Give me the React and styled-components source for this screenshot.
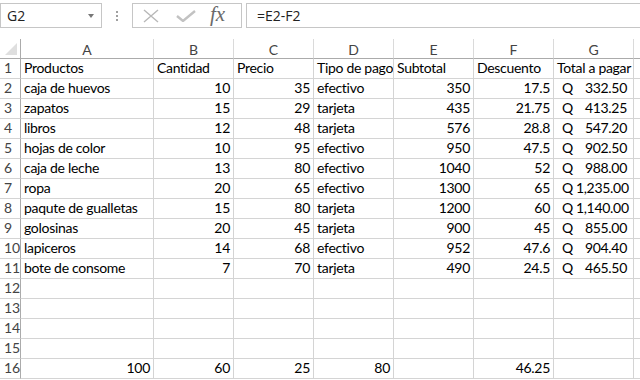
import React from "react";
import styled, { createGlobalStyle } from "styled-components";

const GlobalStyle = createGlobalStyle`
  html, body {
    margin: 0;
    padding: 0;
    background: #ffffff;
    overflow: hidden;
  }
  body {
    font-family: "Lato", "Liberation Sans", sans-serif;
  }
`;

// H is only partly on screen, its letter lies beyond the window edge
const COLUMNS = ["A", "B", "C", "D", "E", "F", "G", ""];

// t = text (left), n = number (right), q = accounting (Q ... right)
const DATA = [
  [["t", "Productos"], ["t", "Cantidad"], ["t", "Precio"], ["t", "Tipo de pago"], ["t", "Subtotal"], ["t", "Descuento"], ["t", "Total a pagar"]],
  [["t", "caja de huevos"], ["n", "10"], ["n", "35"], ["t", "efectivo"], ["n", "350"], ["n", "17.5"], ["q", "332.50"]],
  [["t", "zapatos"], ["n", "15"], ["n", "29"], ["t", "tarjeta"], ["n", "435"], ["n", "21.75"], ["q", "413.25"]],
  [["t", "libros"], ["n", "12"], ["n", "48"], ["t", "tarjeta"], ["n", "576"], ["n", "28.8"], ["q", "547.20"]],
  [["t", "hojas de color"], ["n", "10"], ["n", "95"], ["t", "efectivo"], ["n", "950"], ["n", "47.5"], ["q", "902.50"]],
  [["t", "caja de leche"], ["n", "13"], ["n", "80"], ["t", "efectivo"], ["n", "1040"], ["n", "52"], ["q", "988.00"]],
  [["t", "ropa"], ["n", "20"], ["n", "65"], ["t", "efectivo"], ["n", "1300"], ["n", "65"], ["q", "1,235.00"]],
  [["t", "paqute de gualletas"], ["n", "15"], ["n", "80"], ["t", "tarjeta"], ["n", "1200"], ["n", "60"], ["q", "1,140.00"]],
  [["t", "golosinas"], ["n", "20"], ["n", "45"], ["t", "tarjeta"], ["n", "900"], ["n", "45"], ["q", "855.00"]],
  [["t", "lapiceros"], ["n", "14"], ["n", "68"], ["t", "efectivo"], ["n", "952"], ["n", "47.6"], ["q", "904.40"]],
  [["t", "bote de consome"], ["n", "7"], ["n", "70"], ["t", "tarjeta"], ["n", "490"], ["n", "24.5"], ["q", "465.50"]],
  [],
  [],
  [],
  [],
  [["n", "100"], ["n", "60"], ["n", "25"], ["n", "80"], null, ["n", "46.25"], null],
];

const Page = styled.div`
  width: 640px;
  height: 380px;
  overflow: hidden;
`;

const FormulaBar = styled.div`
  height: 39px;
  box-sizing: border-box;
  padding-top: 3px;
  display: flex;
  align-items: flex-start;
`;

const NameBox = styled.div`
  width: 102px;
  height: 25px;
  box-sizing: border-box;
  border: 1px solid #c6c6c6;
  display: flex;
  align-items: center;
  justify-content: space-between;
  padding: 0 7px 0 6px;
  font-family: "Open Sans", "Liberation Sans", sans-serif;
  font-size: 14px;
  color: #222;
`;

const Caret = styled.span`
  width: 0;
  height: 0;
  border-left: 3.5px solid transparent;
  border-right: 3.5px solid transparent;
  border-top: 4px solid #777;
  margin-top: 1px;
`;

const Grip = styled.div`
  width: 30px;
  height: 25px;
  display: flex;
  flex-direction: column;
  align-items: center;
  justify-content: center;
  gap: 2px;
`;

const Dot = styled.span`
  width: 2px;
  height: 2px;
  background: #a0a0a0;
`;

const ButtonBox = styled.div`
  width: 110px;
  height: 25px;
  box-sizing: border-box;
  border: 1px solid #c6c6c6;
  display: flex;
  align-items: center;
  padding-left: 9px;
  gap: 16px;
`;

const Fx = styled.span`
  font-family: "Liberation Serif", "DejaVu Serif", serif;
  font-style: italic;
  font-size: 21px;
  color: #6a6a6a;
  margin-left: -2px;
  line-height: 1;
  margin-top: -2px;
`;

const FormulaInput = styled.div`
  flex: 1;
  margin-left: 4px;
  margin-right: -2px;
  height: 25px;
  box-sizing: border-box;
  border: 1px solid #c6c6c6;
  display: flex;
  align-items: center;
  padding-left: 10px;
  font-family: "Open Sans", "Liberation Sans", sans-serif;
  font-size: 14px;
  color: #222;
`;

const Sheet = styled.div`
  display: grid;
  width: 714px;
  grid-template-columns: 21px 133px repeat(7, 80px);
  grid-auto-rows: 20px;
  font-size: 14px;
  letter-spacing: -0.3px;
  color: #000;
`;

const Corner = styled.div`
  box-sizing: border-box;
  border-right: 1px solid #ababab;
  border-bottom: 1px solid #ababab;
  display: flex;
  align-items: flex-end;
  justify-content: flex-end;
  padding: 0 3px 3px 0;
`;

const CornerMark = styled.span`
  width: 0;
  height: 0;
  border-left: 12px solid transparent;
  border-bottom: 12px solid #dfdfdf;
`;

const ColHead = styled.div`
  box-sizing: border-box;
  border-right: 1px solid #dadada;
  border-bottom: 1px solid #ababab;
  display: flex;
  align-items: center;
  justify-content: center;
  color: #444;
  font-size: 14px;
  letter-spacing: 0;
  padding-top: 1px;
`;

const RowHead = styled.div`
  box-sizing: border-box;
  border-right: 1px solid #ababab;
  border-bottom: 1px solid #d4d4d4;
  display: flex;
  align-items: flex-end;
  padding: 0 0 2px 4px;
  color: #444;
  font-size: 14px;
  letter-spacing: 0;
`;

const Cell = styled.div`
  box-sizing: border-box;
  border-right: 1px solid #d4d4d4;
  border-bottom: 1px solid #d4d4d4;
  display: flex;
  align-items: flex-end;
  justify-content: ${({ $kind }) => ($kind === "n" ? "flex-end" : $kind === "q" ? "space-between" : "flex-start")};
  gap: 3px;
  padding: ${({ $kind }) => ($kind === "q" ? "0 6px 2px 8px" : "0 3px 2px 3px")};
  white-space: nowrap;
  overflow: hidden;
`;

const Cross = () => (
  <svg width="18" height="14" viewBox="0 0 18 14">
    <path d="M2 1 L16 13 M16 1 L2 13" stroke="#b8b8b8" strokeWidth="1.4" fill="none" />
  </svg>
);

const Check = () => (
  <svg width="20" height="12" viewBox="0 0 20 12">
    <path d="M1 6 L7 11 L19 1" stroke="#c2c2c2" strokeWidth="2.4" fill="none" />
  </svg>
);

const App = () => {
  return (
    <Page>
      <GlobalStyle />
      <FormulaBar>
        <NameBox>
          G2
          <Caret />
        </NameBox>
        <Grip>
          <Dot />
          <Dot />
          <Dot />
        </Grip>
        <ButtonBox>
          <Cross />
          <Check />
          <Fx>fx</Fx>
        </ButtonBox>
        <FormulaInput>=E2-F2</FormulaInput>
      </FormulaBar>
      <Sheet>
        <Corner>
          <CornerMark />
        </Corner>
        {COLUMNS.map((c, i) => (
          <ColHead key={i}>{c}</ColHead>
        ))}
        {DATA.map((row, r) => (
          <React.Fragment key={r}>
            <RowHead>{r + 1}</RowHead>
            {COLUMNS.map((c, i) => {
              const cell = row[i];
              if (!cell) return <Cell key={i} />;
              const [kind, value] = cell;
              return (
                <Cell key={i} $kind={kind}>
                  {kind === "q" ? (
                    <>
                      <span>Q</span>
                      <span>{value}</span>
                    </>
                  ) : (
                    value
                  )}
                </Cell>
              );
            })}
          </React.Fragment>
        ))}
      </Sheet>
    </Page>
  );
};

export default App;
